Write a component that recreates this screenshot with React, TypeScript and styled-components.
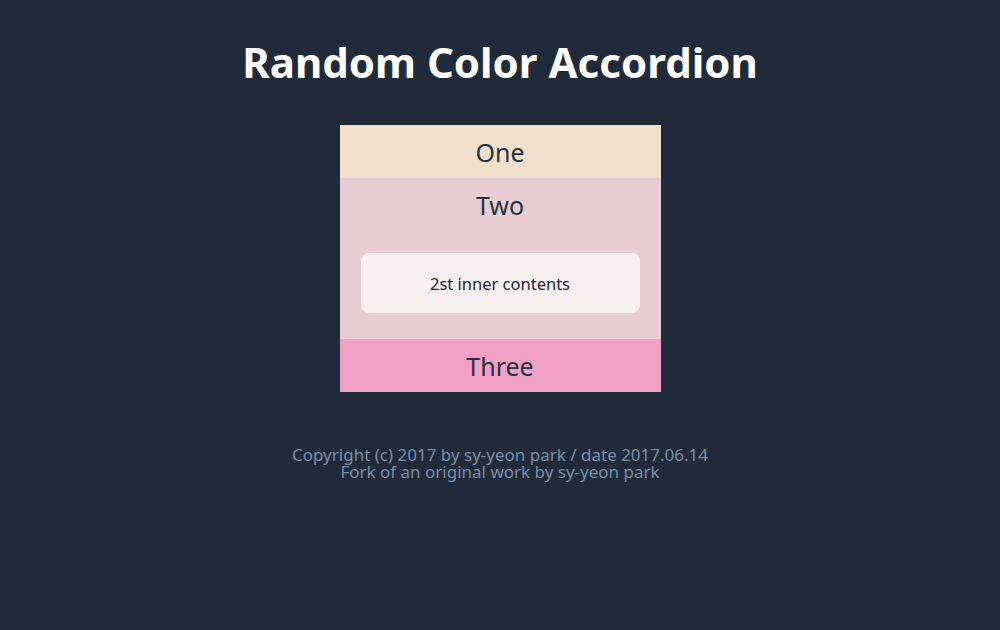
import React from "react";
import styled, { createGlobalStyle } from "styled-components";

const Global = createGlobalStyle`
  html, body { margin: 0; padding: 0; background: #1f2b3a; }
  body { font-family: "Noto Sans", "Open Sans", sans-serif; }
`;

const Page = styled.div`
  display: flex;
  flex-direction: column;
  align-items: center;
  min-height: 630px;
`;

const Title = styled.h1`
  margin: 34px 0 0;
  font-size: 42px;
  font-weight: 700;
  color: #ffffff;
  line-height: 56px;
`;

const Accordion = styled.div`
  margin-top: 35px;
  width: 321px;
  display: flex;
  flex-direction: column;
`;

const Item = styled.div<{ $bg: string }>`
  background: ${(p) => p.$bg};
`;

const Header = styled.div`
  height: 53px;
  display: flex;
  align-items: center;
  justify-content: center;
  font-size: 25px;
  color: #26303f;
`;

const Body = styled.div`
  padding: 22px 21px 26px;
`;

const Inner = styled.div`
  height: 60px;
  border-radius: 8px;
  background: #f7eff0;
  display: flex;
  align-items: center;
  justify-content: center;
  font-size: 16.5px;
  color: #1f2633;
`;

const Footer = styled.footer`
  margin-top: 54px;
  text-align: center;
  color: #7b8ea8;
  font-size: 17px;
  line-height: 17px;
`;

const Line = styled.div`
  white-space: nowrap;
`;

export default function App() {
  return (
    <>
      <Global />
      <Page>
        <Title>Random Color Accordion</Title>
        <Accordion>
          <Item $bg="#f1e1cc">
            <Header>One</Header>
          </Item>
          <Item $bg="#e8cdd2">
            <Header>Two</Header>
            <Body>
              <Inner>2st inner contents</Inner>
            </Body>
          </Item>
          <Item $bg="#f1a1c8">
            <Header>Three</Header>
          </Item>
        </Accordion>
        <Footer>
          <Line>Copyright (c) 2017 by sy-yeon park / date 2017.06.14</Line>
          <Line>Fork of an original work by sy-yeon park</Line>
        </Footer>
      </Page>
    </>
  );
}
